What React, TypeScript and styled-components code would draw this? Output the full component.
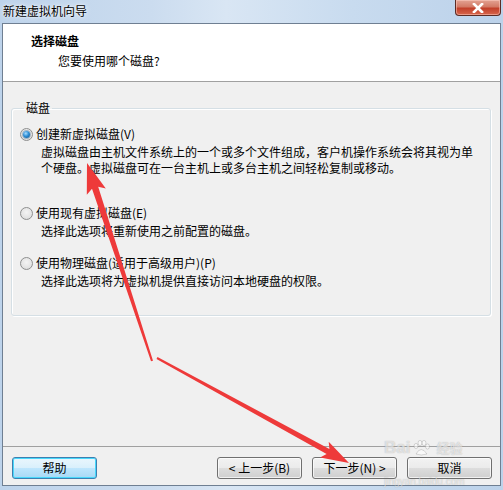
import React from "react";
import styled, { createGlobalStyle } from "styled-components";

const GlobalStyle = createGlobalStyle`
  html, body {
    margin: 0;
    padding: 0;
    background: #c6daef;
  }
  * {
    box-sizing: border-box;
  }
`;

const options = [
  {
    label: "创建新虚拟磁盘(V)",
    desc: [
      "虚拟磁盘由主机文件系统上的一个或多个文件组成，客户机操作系统会将其视为单",
      "个硬盘。虚拟磁盘可在一台主机上或多台主机之间轻松复制或移动。",
    ],
    checked: true,
    spaced: true,
  },
  {
    label: "使用现有虚拟磁盘(E)",
    desc: ["选择此选项将重新使用之前配置的磁盘。"],
    checked: false,
    spaced: false,
  },
  {
    label: "使用物理磁盘(适用于高级用户)(P)",
    desc: ["选择此选项将为虚拟机提供直接访问本地硬盘的权限。"],
    checked: false,
    spaced: false,
  },
];

export default function App() {
  return (
    <>
      <GlobalStyle />
      <Window>
        <TitleBar>
          <TitleText>新建虚拟机向导</TitleText>
          <CloseButton>
            <svg width="14" height="10" viewBox="0 0 14 10">
              <path
                d="M3 1 L11 9 M11 1 L3 9"
                stroke="#ffffff"
                strokeWidth="2.6"
                strokeLinecap="square"
              />
            </svg>
          </CloseButton>
        </TitleBar>

        <Client>
          <Header>
            <HeaderTitle>选择磁盘</HeaderTitle>
            <HeaderSub>您要使用哪个磁盘?</HeaderSub>
          </Header>

          <Body>
            <Group>
              <Legend>磁盘</Legend>
              {options.map((o) => (
                <Option key={o.label} $spaced={o.spaced}>
                  <OptionRow>
                    <Radio $checked={o.checked} />
                    <OptionLabel>{o.label}</OptionLabel>
                  </OptionRow>
                  <Desc>
                    {o.desc.map((line) => (
                      <div key={line}>{line}</div>
                    ))}
                  </Desc>
                </Option>
              ))}
            </Group>
          </Body>

          <Footer>
            <Button $focused>帮助</Button>
            <Spacer />
            <Button>&lt; 上一步(B)</Button>
            <Button>下一步(N) &gt;</Button>
            <Button>取消</Button>
          </Footer>
        </Client>

        <Watermark>
          <MarkTop>
            <span>Bai</span>
            <svg width="18" height="16" viewBox="0 0 18 16">
              <g fill="rgba(255,255,255,0.55)" stroke="rgba(120,120,120,0.35)" strokeWidth="0.8">
                <ellipse cx="4" cy="6" rx="2" ry="2.6" />
                <ellipse cx="8" cy="3" rx="2" ry="2.6" />
                <ellipse cx="12" cy="3" rx="2" ry="2.6" />
                <ellipse cx="15.5" cy="6.5" rx="2" ry="2.6" />
                <path d="M4 14 Q9 5 15 14 Q9 16 4 14 Z" />
              </g>
            </svg>
            <span>经验</span>
          </MarkTop>
          <MarkUrl>jingyan.baidu.com</MarkUrl>
        </Watermark>

        <Arrows width="503" height="490" viewBox="0 0 503 490">
          <polygon
            fill="#ee3a3a"
            points="87,163 105.8,188.5 98.2,186.8 153,360.7 151,361.3 92,188.8 86.8,194.7"
          />
          <polygon
            fill="#ee3a3a"
            points="349,463 328.7,441.7 329.4,448.9 157.5,357.1 156.5,358.9 326.6,454.1 320.1,457.5"
          />
        </Arrows>
      </Window>
    </>
  );
}

const Window = styled.div`
  position: relative;
  width: 503px;
  height: 490px;
  display: flex;
  flex-direction: column;
  padding: 0 2px 4px 2px;
  background: linear-gradient(
    90deg,
    #bdd3eb 0%,
    #cbdcef 30%,
    #d9e6f4 45%,
    #c8dbef 70%,
    #bcd2ea 100%
  );
  font-family: "Noto Sans CJK SC", "Microsoft YaHei", sans-serif;
  font-size: 12px;
  color: #000;
  overflow: hidden;
`;

const TitleBar = styled.div`
  height: 23px;
  display: flex;
  align-items: flex-start;
  padding-left: 1px;
`;

const TitleText = styled.div`
  line-height: 22px;
  font-size: 12px;
  color: #000;
  text-shadow: 0 0 6px rgba(255, 255, 255, 0.9), 0 0 2px #fff;
`;

const CloseButton = styled.div`
  margin-left: auto;
  width: 46px;
  height: 16px;
  display: flex;
  align-items: center;
  justify-content: center;
  border: 1px solid #5b2b24;
  border-top: none;
  border-radius: 0 0 4px 4px;
  background: linear-gradient(180deg, #e3a393 0%, #d37a66 45%, #c2402a 55%, #d7664c 100%);
  box-shadow: inset 0 0 0 1px rgba(255, 210, 200, 0.5);
`;

const Client = styled.div`
  flex: 1;
  display: flex;
  flex-direction: column;
  border: 1px solid #6f7f92;
  background: #f0f0f0;
`;

const Header = styled.div`
  height: 58px;
  background: #ffffff;
  border-bottom: 1px solid #a0a0a0;
  padding: 9px 0 0 28px;
  display: flex;
  flex-direction: column;
  gap: 4px;
`;

const HeaderTitle = styled.div`
  font-weight: bold;
  line-height: 16px;
`;

const HeaderSub = styled.div`
  line-height: 16px;
  padding-left: 27px;
`;

const Body = styled.div`
  flex: 1;
  padding: 18px 9px 0 8px;
`;

const Group = styled.fieldset`
  margin: 0;
  padding: 10px 8px 26px 8px;
  border: 1px solid #d5dfe5;
  border-radius: 3px;
  box-shadow: inset 1px 1px 0 #ffffff, 1px 1px 0 #ffffff;
`;

const Legend = styled.legend`
  padding: 0 2px;
  margin-left: 4px;
  line-height: 16px;
`;

const Option = styled.div<{ $spaced: boolean }>`
  display: flex;
  flex-direction: column;
  margin-bottom: ${(p) => (p.$spaced ? "29px" : "16px")};
  &:last-child {
    margin-bottom: 0;
  }
`;

const OptionRow = styled.div`
  display: flex;
  align-items: center;
  gap: 3px;
  height: 16px;
`;

const Radio = styled.span<{ $checked: boolean }>`
  width: 13px;
  height: 13px;
  border-radius: 50%;
  border: 1px solid #8e8f8f;
  background: radial-gradient(circle at 50% 40%, #f4f4f4 0%, #e4e4e4 60%, #d2d2d2 100%);
  display: flex;
  align-items: center;
  justify-content: center;
  &::after {
    content: "";
    display: ${(p) => (p.$checked ? "block" : "none")};
    width: 7px;
    height: 7px;
    border-radius: 50%;
    background: radial-gradient(circle at 40% 35%, #a8dcff 0%, #2f8fd6 45%, #0b4f86 100%);
    box-shadow: 0 0 0 1px rgba(30, 80, 130, 0.35);
  }
`;

const OptionLabel = styled.span`
  line-height: 16px;
`;

const Desc = styled.div`
  margin-top: 2px;
  padding-left: 21px;
  line-height: 16px;
  white-space: nowrap;
`;

const Footer = styled.div`
  display: flex;
  align-items: center;
  gap: 10px;
  border-top: 1px solid #a0a0a0;
  padding: 10px 8px 6px 9px;
`;

const Spacer = styled.div`
  flex: 1;
`;

const Button = styled.div<{ $focused?: boolean }>`
  width: 85px;
  height: 22px;
  display: flex;
  align-items: center;
  justify-content: center;
  border-radius: 3px;
  border: 1px solid ${(p) => (p.$focused ? "#3c7fb1" : "#707070")};
  background: ${(p) =>
    p.$focused
      ? "linear-gradient(180deg, #eaf6fd 0%, #d9f0fc 50%, #bee6fd 51%, #a7d9f5 100%)"
      : "linear-gradient(180deg, #f2f2f2 0%, #ebebeb 50%, #dddddd 51%, #cfcfcf 100%)"};
  box-shadow: inset 0 0 0 1px ${(p) => (p.$focused ? "#48d8fb" : "rgba(255,255,255,0.7)")};
  line-height: 16px;
`;

const Watermark = styled.div`
  position: absolute;
  left: 384px;
  top: 438px;
  display: flex;
  flex-direction: column;
  align-items: flex-start;
  color: rgba(255, 255, 255, 0.6);
  text-shadow: 0 0 1px rgba(90, 90, 90, 0.45);
  pointer-events: none;
`;

const MarkTop = styled.div`
  display: flex;
  align-items: center;
  gap: 2px;
  height: 20px;
  font-family: "Liberation Sans", Arial, sans-serif;
  font-size: 17px;
  font-weight: bold;
  line-height: 18px;
  span:last-child {
    font-family: "Noto Sans CJK SC", sans-serif;
    font-size: 13px;
    line-height: 14px;
    margin-left: 4px;
  }
`;

const MarkUrl = styled.div`
  margin-top: 18px;
  font-family: "Liberation Sans", Arial, sans-serif;
  font-size: 10px;
  line-height: 11px;
`;

const Arrows = styled.svg`
  position: absolute;
  left: 0;
  top: 0;
  pointer-events: none;
`;
